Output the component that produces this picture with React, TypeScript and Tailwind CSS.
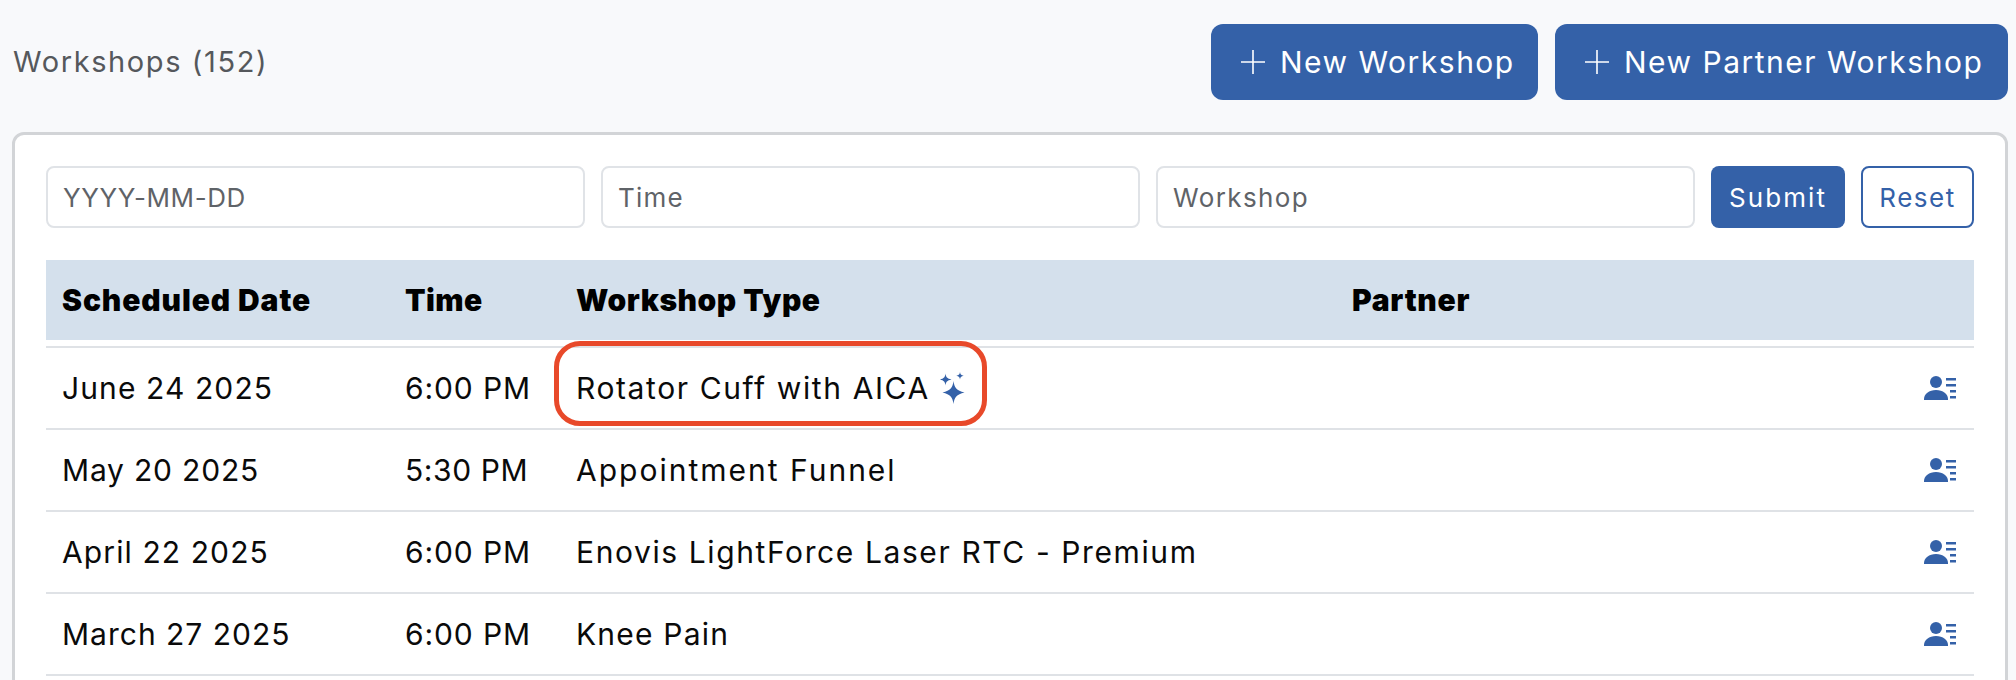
const font = { fontFamily: "Inter, 'Noto Sans', sans-serif" };

const rows = [
  { date: "June 24 2025", dt: "tracking-[1.1px]", time: "6:00 PM", tt: "tracking-[0.9px]", type: "Rotator Cuff with AICA", ty: "tracking-[1.6px]", spark: true },
  { date: "May 20 2025", dt: "tracking-[0.8px]", time: "5:30 PM", tt: "tracking-[0.6px]", type: "Appointment Funnel", ty: "tracking-[2px]" },
  { date: "April 22 2025", dt: "tracking-[1.1px]", time: "6:00 PM", tt: "tracking-[0.9px]", type: "Enovis LightForce Laser RTC - Premium", ty: "tracking-[1.6px]" },
  { date: "March 27 2025", dt: "tracking-[1px]", time: "6:00 PM", tt: "tracking-[0.9px]", type: "Knee Pain", ty: "tracking-[1.2px]" },
  { date: "", dt: "", time: "", tt: "", type: "", ty: "" },
];

function Plus() {
  return (
    <svg width="26" height="26" viewBox="0 0 26 26" className="shrink-0" stroke="currentColor" strokeWidth="1.6">
      <path d="M13 1v24M1 13h24" />
    </svg>
  );
}

function Sparkles() {
  return (
    <svg width="25" height="32" viewBox="0 0 25 32" fill="#3461a8" className="ml-[10px] shrink-0">
      <path d="M13.500 9c.8 6.500 3 9.500 11 11.500-8 2-10.200 5-11 11.500-.8-6.500-3-9.500-11-11.500 8-2 10.200-5 11-11.500z" />
      <path d="M5.500 1.500c.4 3.500 1.500 5 6 6-4.500 1-5.600 2.500-6 6-.4-3.500-1.500-5-5.500-6 4-1 5.100-2.500 5.500-6z" />
      <path d="M20 0c.3 2.200 1 3.100 3.700 3.700C21 4.300 20.300 5.200 20 7.400c-.3-2.200-1-3.100-3.700-3.700C19 3.100 19.700 2.200 20 0z" />
    </svg>
  );
}

function PersonList() {
  return (
    <svg width="32" height="24" viewBox="0 0 32 24" fill="#3461a8" className="shrink-0">
      <circle cx="12" cy="6" r="6" />
      <path d="M0 24v-1c0-5 5-9 12-9s12 4 12 9v1H0z" />
      <rect x="22" y="2" width="10" height="2.500" />
      <rect x="22" y="8" width="10" height="2.500" />
      <rect x="26" y="14" width="6" height="2.500" />
      <rect x="26" y="20" width="6" height="2.500" />
    </svg>
  );
}

function Field({ placeholder, tracking }: { placeholder: string; tracking: string }) {
  return (
    <input
      readOnly
      placeholder={placeholder}
      style={font}
      className={`h-[62px] w-[539px] rounded-[8px] border-2 border-[#e0e3e7] bg-white px-[15px] text-[26px] text-[#222] placeholder:text-[#5f6368] ${tracking}`}
    />
  );
}

const cols = "grid grid-cols-[343px_172px_775px_1fr_50px] items-center";

export default function App() {
  return (
    <div style={font} className="h-[680px] overflow-hidden bg-[#f8f9fb] pt-[24px]">
      <div className="flex h-[76px] items-center justify-between pl-[13px] pr-[8px]">
        <h1 className="text-[29px] font-normal tracking-[1.6px] text-[#55585c]">Workshops (152)</h1>
        <div className="flex gap-[17px]">
          <button className="flex h-[76px] w-[327px] items-center gap-[14px] rounded-[12px] bg-[#3461a8] pl-[29px] text-[30px] tracking-[1.5px] text-white">
            <Plus />
            New Workshop
          </button>
          <button className="flex h-[76px] w-[453px] items-center gap-[14px] rounded-[12px] bg-[#3461a8] pl-[29px] text-[30px] tracking-[1.5px] text-white">
            <Plus />
            New Partner Workshop
          </button>
        </div>
      </div>

      <div className="ml-[12px] mr-[8px] mt-[32px] h-[700px] rounded-[12px] border-[3px] border-[#d2d4d7] bg-white p-[31px]">
        <div className="flex items-stretch gap-[16px]">
          <Field placeholder="YYYY-MM-DD" tracking="tracking-[0.6px]" />
          <Field placeholder="Time" tracking="tracking-[1.2px]" />
          <Field placeholder="Workshop" tracking="tracking-[1.4px]" />
          <button className="w-[134px] rounded-[8px] bg-[#3461a8] text-[26px] tracking-[2.1px] text-white">Submit</button>
          <button className="w-[113px] rounded-[8px] border-2 border-[#3461a8] bg-white text-[26px] tracking-[1.5px] text-[#3461a8]">Reset</button>
        </div>

        <div className={`${cols} mt-[32px] h-[80px] bg-[#d4e0ec] text-[30px] font-black text-black`}>
          <div className="pl-[16px] tracking-[0.9px]">Scheduled Date</div>
          <div className="pl-[16px] tracking-[0.4px]">Time</div>
          <div className="pl-[15px] tracking-[0.5px]">Workshop Type</div>
          <div className="pl-[16px] tracking-[0.7px]">Partner</div>
          <div />
        </div>

        <div className="mt-[6px]">
          {rows.map((r, i) => (
            <div key={i} className={`${cols} h-[82px] border-t-2 border-[#dfe2e6] text-[30px] text-[#0a0a0a]`}>
              <div className={`pl-[16px] ${r.dt}`}>{r.date}</div>
              <div className={`pl-[16px] ${r.tt}`}>{r.time}</div>
              <div className={`relative flex items-center pl-[15px] ${r.ty}`}>
                {r.type}
                {r.spark && <Sparkles />}
                {r.spark && (
                  <span className="absolute left-[-7px] top-[-25px] h-[85px] w-[433px] rounded-[26px] border-[5px] border-[#e8492a]" />
                )}
              </div>
              <div />
              <div className="flex justify-start">{r.date && <PersonList />}</div>
            </div>
          ))}
        </div>
      </div>
    </div>
  );
}
